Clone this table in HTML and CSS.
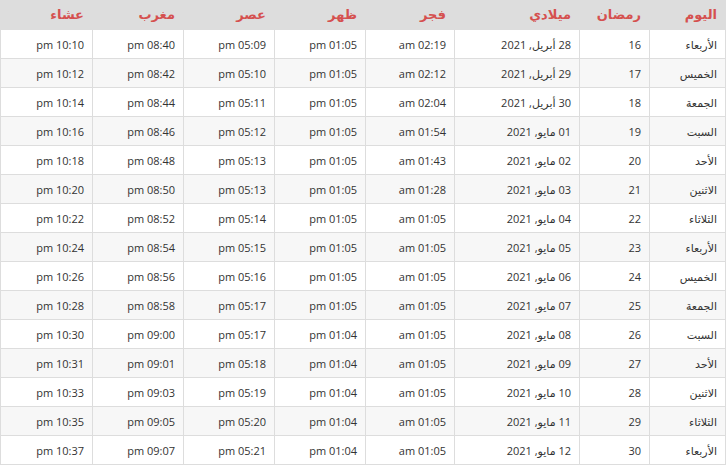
FILE: index.html
```html
<!DOCTYPE html>
<html lang="ar" dir="rtl">
<head>
<meta charset="utf-8">
<title>إمساكية رمضان</title>
<link rel="stylesheet" href="styles.css">
</head>
<body>
<table class="timetable">
  <colgroup>
    <col class="c-day"><col class="c-ram"><col class="c-greg"><col class="c-fajr"><col class="c-dhuhr"><col class="c-asr"><col class="c-maghrib"><col class="c-isha">
  </colgroup>
  <thead>
    <tr><th>اليوم</th><th>رمضان</th><th>ميلادي</th><th>فجر</th><th>ظهر</th><th>عصر</th><th>مغرب</th><th>عشاء</th></tr>
  </thead>
  <tbody>
    <tr><td>الأربعاء</td><td>16</td><td>28 أبريل, 2021</td><td>02:19 am</td><td>01:05 pm</td><td>05:09 pm</td><td>08:40 pm</td><td>10:10 pm</td></tr>
    <tr><td>الخميس</td><td>17</td><td>29 أبريل, 2021</td><td>02:12 am</td><td>01:05 pm</td><td>05:10 pm</td><td>08:42 pm</td><td>10:12 pm</td></tr>
    <tr><td>الجمعة</td><td>18</td><td>30 أبريل, 2021</td><td>02:04 am</td><td>01:05 pm</td><td>05:11 pm</td><td>08:44 pm</td><td>10:14 pm</td></tr>
    <tr><td>السبت</td><td>19</td><td>01 مايو, 2021</td><td>01:54 am</td><td>01:05 pm</td><td>05:12 pm</td><td>08:46 pm</td><td>10:16 pm</td></tr>
    <tr><td>الأحد</td><td>20</td><td>02 مايو, 2021</td><td>01:43 am</td><td>01:05 pm</td><td>05:13 pm</td><td>08:48 pm</td><td>10:18 pm</td></tr>
    <tr><td>الاثنين</td><td>21</td><td>03 مايو, 2021</td><td>01:28 am</td><td>01:05 pm</td><td>05:13 pm</td><td>08:50 pm</td><td>10:20 pm</td></tr>
    <tr><td>الثلاثاء</td><td>22</td><td>04 مايو, 2021</td><td>01:05 am</td><td>01:05 pm</td><td>05:14 pm</td><td>08:52 pm</td><td>10:22 pm</td></tr>
    <tr><td>الأربعاء</td><td>23</td><td>05 مايو, 2021</td><td>01:05 am</td><td>01:05 pm</td><td>05:15 pm</td><td>08:54 pm</td><td>10:24 pm</td></tr>
    <tr><td>الخميس</td><td>24</td><td>06 مايو, 2021</td><td>01:05 am</td><td>01:05 pm</td><td>05:16 pm</td><td>08:56 pm</td><td>10:26 pm</td></tr>
    <tr><td>الجمعة</td><td>25</td><td>07 مايو, 2021</td><td>01:05 am</td><td>01:05 pm</td><td>05:17 pm</td><td>08:58 pm</td><td>10:28 pm</td></tr>
    <tr><td>السبت</td><td>26</td><td>08 مايو, 2021</td><td>01:05 am</td><td>01:04 pm</td><td>05:17 pm</td><td>09:00 pm</td><td>10:30 pm</td></tr>
    <tr><td>الأحد</td><td>27</td><td>09 مايو, 2021</td><td>01:05 am</td><td>01:04 pm</td><td>05:18 pm</td><td>09:01 pm</td><td>10:31 pm</td></tr>
    <tr><td>الاثنين</td><td>28</td><td>10 مايو, 2021</td><td>01:05 am</td><td>01:04 pm</td><td>05:19 pm</td><td>09:03 pm</td><td>10:33 pm</td></tr>
    <tr><td>الثلاثاء</td><td>29</td><td>11 مايو, 2021</td><td>01:05 am</td><td>01:04 pm</td><td>05:20 pm</td><td>09:05 pm</td><td>10:35 pm</td></tr>
    <tr><td>الأربعاء</td><td>30</td><td>12 مايو, 2021</td><td>01:05 am</td><td>01:04 pm</td><td>05:21 pm</td><td>09:07 pm</td><td>10:37 pm</td></tr>
  </tbody>
</table>
</body>
</html>
```
FILE: styles.css
```css
html, body {
  margin: 0;
  padding: 0;
  background: #ffffff;
}

body {
  font-family: "Open Sans", "DejaVu Sans", sans-serif;
  font-size: 11px;
  color: #333333;
}

.timetable {
  direction: rtl;
  width: 725px;
  margin-left: 0;
  margin-right: auto;
  table-layout: fixed;
  border-collapse: collapse;
  border-spacing: 0;
}

.c-day { width: 76px; }
.c-ram { width: 70px; }
.c-greg { width: 125px; }
.c-fajr { width: 89px; }
.c-dhuhr { width: 91px; }
.c-asr { width: 91px; }
.c-maghrib { width: 91px; }
.c-isha { width: 92px; }

.timetable th {
  background: #dddddd;
  color: #d5504f;
  font-weight: bold;
  font-size: 13px;
  text-align: right;
  padding: 0 8px;
  height: 29px;
  border: 1px solid #dddddd;
  border-top: 0;
  line-height: 1;
}

.timetable td {
  text-align: right;
  padding: 0 8px;
  height: 28px;
  border: 1px solid #dddddd;
  white-space: nowrap;
  line-height: 1;
}

.timetable tbody tr:nth-child(even) td {
  background: #f7f7f7;
}
```
